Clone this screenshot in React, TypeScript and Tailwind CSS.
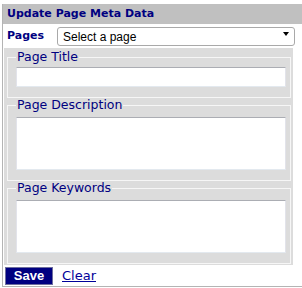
import React from "react";

function Field({ label, rows }: { label: string; rows?: number }) {
  return (
    <fieldset className="border border-[#f6f6f6] pl-[8px] pr-[4px] pb-[10px]">
      <legend className="px-[1px] text-[12.5px] leading-[14px] text-[#000080]">{label}</legend>
      {rows ? (
        <textarea
          rows={rows}
          className="mt-[5px] block w-full h-[53px] resize-none bg-white border border-[#e2e3ea] border-t-[#abadb3] border-b-[#e3e9ef] outline-none"
        />
      ) : (
        <input
          type="text"
          className="mt-[3px] block w-full h-[20px] bg-white border border-[#e2e3ea] border-t-[#abadb3] border-b-[#e3e9ef] outline-none"
        />
      )}
    </fieldset>
  );
}

export default function App() {
  return (
    <div className="w-[302px] h-[288px] bg-white pl-[2px] pt-[4px] overflow-hidden font-['DejaVu_Sans',sans-serif]">
      <div className="w-[320px] border-l border-b border-[#b4b4b4]">
        <div className="h-[20px] bg-[#c0c0c0] pl-[4px] flex items-center text-[11px] font-bold text-[#000080]">
          Update Page Meta Data
        </div>
        <div className="flex items-center h-[24px] pl-[4px]">
          <span className="w-[50px] text-[11px] font-bold text-[#000080]">Pages</span>
          <div className="relative">
            <select className="appearance-none w-[238px] h-[19px] bg-white border border-[#a9a9a9] rounded-[3px] pl-[5px] text-[12px] text-black font-['Liberation_Sans',Arial,sans-serif] outline-none">
              <option>Select a page</option>
            </select>
            <svg className="absolute right-[6px] top-[8px]" width="6" height="4" viewBox="0 0 6 4">
              <path d="M0 0h6L3 4z" fill="#000" />
            </svg>
          </div>
        </div>
        <div className="ml-[1px] w-[289px] bg-[#dcdcdc] pl-[3px] pr-[2px] pt-[2px] pb-[1px] flex flex-col">
          <Field label="Page Title" />
          <Field label="Page Description" rows={3} />
          <Field label="Page Keywords" rows={3} />
        </div>
        <div className="flex items-center gap-[9px] pl-[2px] py-[1px] h-[21px]">
          <button className="h-[18px] w-[48px] bg-[#000080] border border-[#6e6e9e] text-white text-[13px] font-bold font-['Liberation_Sans',Arial,sans-serif] leading-none">
            Save
          </button>
          <a href="#" className="text-[13px] text-[#000099] underline">
            Clear
          </a>
        </div>
      </div>
    </div>
  );
}
